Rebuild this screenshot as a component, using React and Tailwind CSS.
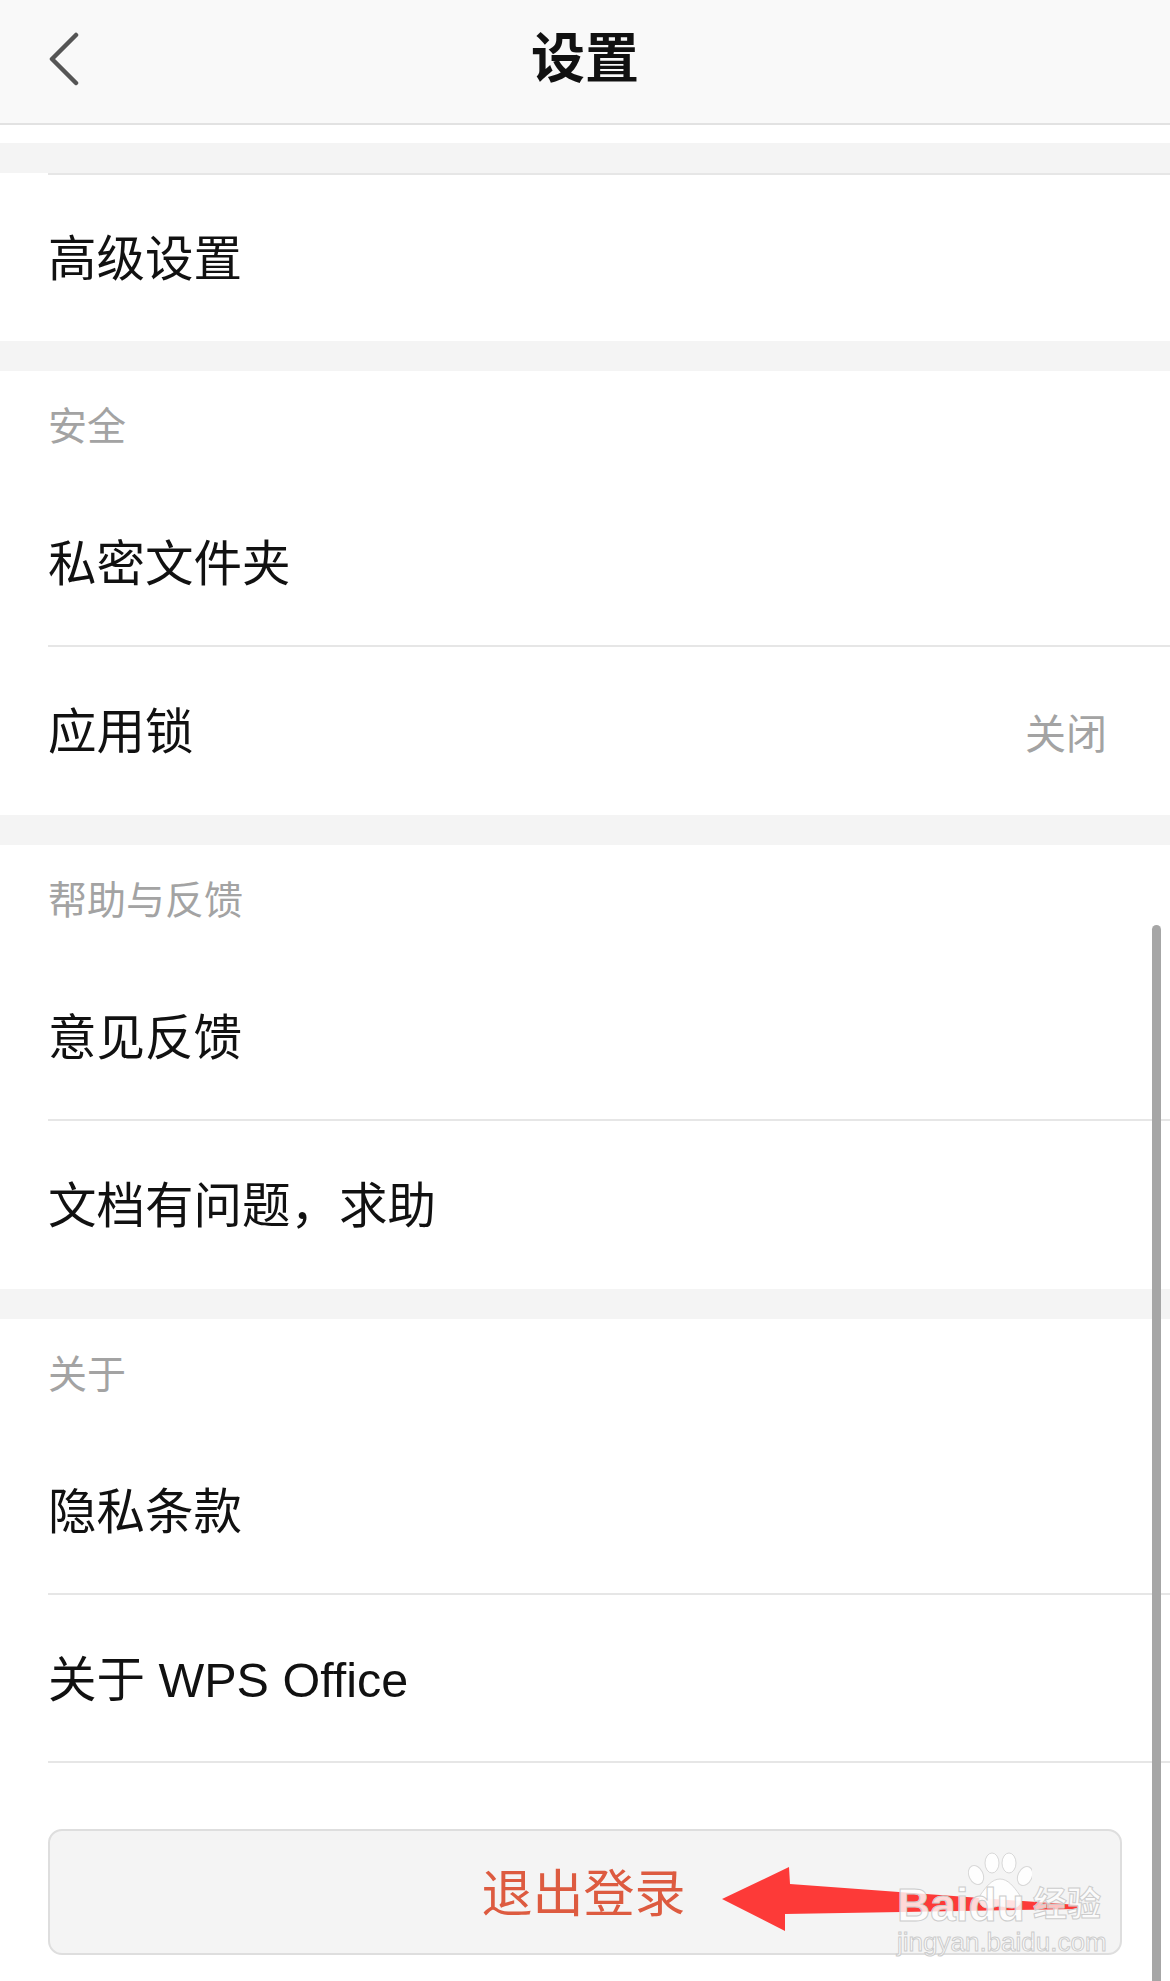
import React from 'react';

const font = "font-['Liberation_Sans','Noto_Sans_CJK_SC',sans-serif]";

const Band = () => <div className="h-[30px] bg-[#f4f4f4]" />;

const Label = ({ children }) => (
    <div className="h-[108px] pt-[4px] pl-[48px] flex items-center text-[39px] text-[#a3a3a3]">{children}</div>
);

const Row = ({ title, value, line, className = 'h-[168px]' }) => (
    <div className={`ml-[48px] flex items-center justify-between ${className} ${line ? 'border-b-2 border-[#e6e6e6]' : ''}`}>
        <span className={`${line ? 'pt-[5px]' : 'pt-[2px]'} text-[48.5px] text-[#111111] whitespace-pre`}>{title}</span>
        {value && <span className="text-[41px] text-[#a3a3a3] pr-[63px] pt-[10px]">{value}</span>}
    </div>
);

const Watermark = () => (
    <div className="absolute left-[896px] top-[1852px] w-[212px] h-[106px]">
        <svg className="absolute left-[72px] top-0" width="64" height="58" viewBox="0 0 64 58" fill="#ffffff" fillOpacity="0.85" stroke="#d8d8d8" strokeWidth="1">
            <ellipse cx="8" cy="23" rx="7" ry="10" transform="rotate(-25 8 23)" />
            <ellipse cx="24" cy="11" rx="7" ry="10" />
            <ellipse cx="41" cy="11" rx="7" ry="10" />
            <ellipse cx="57" cy="24" rx="7" ry="10" transform="rotate(25 57 24)" />
            <path d="M32 27c8 0 14 8 19 15 4 6 1 14-7 14-5 0-8-2-12-2s-7 2-12 2c-8 0-11-8-7-14 5-7 11-15 19-15z" />
        </svg>
        <span className="absolute left-[1px] top-[28px] text-[46px] leading-[50px] font-bold text-white/80 [-webkit-text-stroke:1px_#cccccc]">Baidu</span>
        <span className="absolute left-[137px] top-[33px] text-[34px] leading-[38px] font-bold text-white/70 [-webkit-text-stroke:1px_#cccccc]">经验</span>
        <span className="absolute left-[1px] top-[75px] text-[26px] leading-[30px] text-white/75 [-webkit-text-stroke:1px_#cccccc]">jingyan.baidu.com</span>
    </div>
);

const App = () => {
    return (
        <div className={`relative w-[1170px] h-[1981px] overflow-hidden bg-white ${font}`}>
            <div className="relative h-[125px] bg-[#f9f9f9] border-b-2 border-[#e2e2e2] flex items-center justify-center">
                <svg className="absolute left-[48px] top-[31px]" width="32" height="55" viewBox="0 0 32 55" fill="none" stroke="#555555" strokeWidth="4.5" strokeLinecap="round" strokeLinejoin="round">
                    <path d="M28 4 L4 28 L28 52" />
                </svg>
                <span className="text-[54px] font-bold text-[#111111] pb-[5px]">设置</span>
            </div>
            <div className="h-[18px]" />
            <Band />

            <Row title="高级设置" line={false} className="h-[168px] border-t-2 border-[#e6e6e6]" />
            <Band />

            <Label>安全</Label>
            <Row title="私密文件夹" line />
            <Row title="应用锁" value="关闭" />
            <Band />

            <Label>帮助与反馈</Label>
            <Row title="意见反馈" line />
            <Row title={'文档有问题\uFF0C求助'} />
            <Band />

            <Label>关于</Label>
            <Row title="隐私条款" line />
            <Row title="关于 WPS Office" line />

            <div className="mt-[66px] ml-[48px] w-[1074px] h-[126px] rounded-[14px] border-2 border-[#dedede] bg-[#f4f4f4] flex items-center justify-center">
                <span className="text-[51px] text-[#dd5b40] pt-[6px] pr-[3px]">退出登录</span>
            </div>

            <div className="absolute left-[1152px] top-[925px] bottom-0 w-[9px] rounded-t-full bg-[#a6a6a6]" />

            <svg className="absolute left-0 top-0" width="1170" height="1981" fill="#fd3a38">
                <polygon points="722,1899 789,1867 790,1884 1078,1905 1078,1909 785,1914 785,1931" />
            </svg>
            <Watermark />
        </div>
    );
};

export default App;
